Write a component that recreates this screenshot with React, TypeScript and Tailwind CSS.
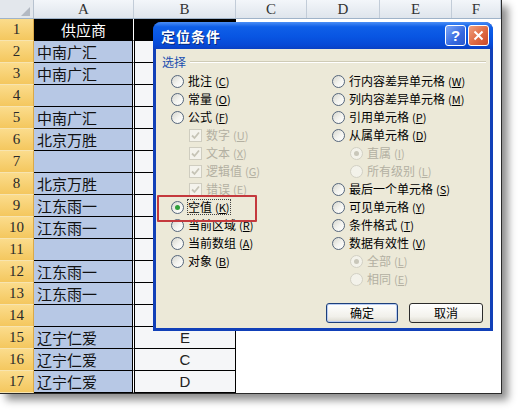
import React from "react";

const cjk = "font-['Noto_Sans_CJK_SC','Noto_Sans',sans-serif]";
const serif = "font-['Liberation_Serif',serif]";

const sheetRows: { a: string; b?: string; head?: boolean }[] = [
  { a: "供应商", head: true },
  { a: "中南广汇" },
  { a: "中南广汇" },
  { a: "" },
  { a: "中南广汇" },
  { a: "北京万胜" },
  { a: "" },
  { a: "北京万胜" },
  { a: "江东雨一" },
  { a: "江东雨一" },
  { a: "" },
  { a: "江东雨一" },
  { a: "江东雨一" },
  { a: "" },
  { a: "辽宁仁爱", b: "E" },
  { a: "辽宁仁爱", b: "C" },
  { a: "辽宁仁爱", b: "D" },
];

const columns = ["A", "B", "C", "D", "E", "F"];
const gridCols = "grid grid-cols-[34px_100px_102px_71px_73px_72px_1fr]";

type Item = {
  text: string;
  k: string;
  kind: "radio" | "check";
  checked?: boolean;
  disabled?: boolean;
  indent?: boolean;
  focus?: boolean;
};

const leftItems: Item[] = [
  { text: "批注", k: "C", kind: "radio" },
  { text: "常量", k: "O", kind: "radio" },
  { text: "公式", k: "F", kind: "radio" },
  { text: "数字", k: "U", kind: "check", checked: true, disabled: true, indent: true },
  { text: "文本", k: "X", kind: "check", checked: true, disabled: true, indent: true },
  { text: "逻辑值", k: "G", kind: "check", checked: true, disabled: true, indent: true },
  { text: "错误", k: "E", kind: "check", checked: true, disabled: true, indent: true },
  { text: "空值", k: "K", kind: "radio", checked: true, focus: true },
  { text: "当前区域", k: "R", kind: "radio" },
  { text: "当前数组", k: "A", kind: "radio" },
  { text: "对象", k: "B", kind: "radio" },
];

const rightItems: Item[] = [
  { text: "行内容差异单元格", k: "W", kind: "radio" },
  { text: "列内容差异单元格", k: "M", kind: "radio" },
  { text: "引用单元格", k: "P", kind: "radio" },
  { text: "从属单元格", k: "D", kind: "radio" },
  { text: "直属", k: "I", kind: "radio", checked: true, disabled: true, indent: true },
  { text: "所有级别", k: "L", kind: "radio", disabled: true, indent: true },
  { text: "最后一个单元格", k: "S", kind: "radio" },
  { text: "可见单元格", k: "Y", kind: "radio" },
  { text: "条件格式", k: "T", kind: "radio" },
  { text: "数据有效性", k: "V", kind: "radio" },
  { text: "全部", k: "L", kind: "radio", checked: true, disabled: true, indent: true },
  { text: "相同", k: "E", kind: "radio", disabled: true, indent: true },
];

function Radio({ checked, disabled }: { checked?: boolean; disabled?: boolean }) {
  return (
    <span
      className={`w-[13px] h-[13px] shrink-0 rounded-full border flex items-center justify-center ${
        disabled
          ? "border-[#d2d0c4] bg-[#f3f2ea]"
          : "border-[#55667c] bg-[linear-gradient(135deg,#d6d6ce,#f4f4f0_55%,#ffffff)]"
      }`}
    >
      {checked && (
        <span className={`w-[5px] h-[5px] rounded-full ${disabled ? "bg-[#c9c7ba]" : "bg-[#2f9e3a]"}`} />
      )}
    </span>
  );
}

function Check({ checked }: { checked?: boolean }) {
  return (
    <span className="w-[13px] h-[13px] shrink-0 border border-[#cfcdc0] bg-[#f4f3ec] flex items-center justify-center">
      {checked && (
        <svg width="9" height="9" viewBox="0 0 9 9">
          <path d="M1 4.5 L3.5 7 L8 1.5" fill="none" stroke="#c6c4b6" strokeWidth="1.8" />
        </svg>
      )}
    </span>
  );
}

function Option({ item }: { item: Item }) {
  return (
    <div className={`h-[18px] flex items-center gap-[4px] ${item.indent ? "pl-[18px]" : ""}`}>
      {item.kind === "radio" ? (
        <Radio checked={item.checked} disabled={item.disabled} />
      ) : (
        <Check checked={item.checked} />
      )}
      <span
        className={`text-[12px] leading-[14px] whitespace-nowrap ${
          item.disabled ? "text-[#b3b0a2]" : "text-black"
        } ${item.focus ? "outline-1 outline-dotted outline-[#444]" : ""}`}
      >
        {item.text}
        <span className="text-[11px] ml-[3px]">
          (<span className="underline">{item.k}</span>)
        </span>
      </span>
    </div>
  );
}

function Dialog() {
  return (
    <div className="absolute left-[153px] top-[22px] w-[340px] h-[309px] rounded-t-[8px] bg-[#1140b8] px-[3px] pb-[3px] flex flex-col">
      {/* Title bar */}
      <div className="h-[27px] -mx-[3px] rounded-t-[8px] bg-[linear-gradient(to_bottom,#4a8ef6_0%,#0f5fe8_18%,#0855e2_55%,#0749d6_85%,#0a3fc2_100%)] flex items-center pl-[8px] pr-[4px]">
        <span className="text-white font-bold text-[14px] leading-none tracking-[1px] [text-shadow:1px_1px_0_#0a2a7a]">
          定位条件
        </span>
        <div className="ml-auto flex gap-[2px] items-center">
          <div className="w-[21px] h-[21px] rounded-[3px] border border-white bg-[linear-gradient(135deg,#7ea7f7,#3569e0_60%,#2a58cc)] flex items-center justify-center text-white font-bold text-[15px] leading-none font-['Liberation_Sans',sans-serif]">
            ?
          </div>
          <div className="w-[21px] h-[21px] rounded-[3px] border border-white bg-[linear-gradient(135deg,#f0a07e,#de6a42_55%,#c9482a)] flex items-center justify-center">
            <svg width="11" height="11" viewBox="0 0 11 11">
              <path d="M1.5 1.5 L9.5 9.5 M9.5 1.5 L1.5 9.5" stroke="#fff" strokeWidth="2" />
            </svg>
          </div>
        </div>
      </div>

      {/* Body */}
      <div className="relative flex-1 bg-[#ece9d8] flex flex-col">
        <div className="flex items-center h-[14px] mt-[6px] pl-[6px] pr-[4px]">
          <span className="text-[12px] leading-[14px] text-[#1b4fb0]">选择</span>
          <div className="flex-1 ml-[4px] h-[2px] border-t border-[#cfcbb6] border-b border-b-white" />
        </div>

        <div className="flex mt-[3px]">
          <div className="w-[161px] ml-[15px] flex flex-col">
            {leftItems.map((it) => (
              <Option key={it.text} item={it} />
            ))}
          </div>
          <div className="flex-1 flex flex-col">
            {rightItems.map((it) => (
              <Option key={it.text + it.k} item={it} />
            ))}
          </div>
        </div>

        <div className="mt-auto mb-[5px] flex justify-end gap-[11px] pr-[7px]">
          <button className="w-[72px] h-[20px] rounded-[3px] border border-[#1d3f7a] bg-[linear-gradient(to_bottom,#ffffff,#f1f0ea_70%,#dcdad0)] shadow-[inset_0_0_0_1px_#b9cdf3] text-[12px] leading-none text-black">
            确定
          </button>
          <button className="w-[74px] h-[20px] rounded-[3px] border border-[#2b2b2b] bg-[linear-gradient(to_bottom,#ffffff,#f3f2ec_70%,#dedcd2)] text-[12px] leading-none text-black">
            取消
          </button>
        </div>

        {/* red annotation box */}
        <div className="absolute left-[1px] top-[146px] w-[100px] h-[27px] border-2 border-[#c4393d] rounded-[1px]" />
      </div>
    </div>
  );
}

export default function App() {
  return (
    <div className={`w-[524px] h-[416px] bg-white overflow-hidden ${cjk}`}>
      <div className="relative w-[502px] border-r border-b border-[#2a2a2a] bg-white shadow-[6px_6px_8px_rgba(0,0,0,0.45)]">
        {/* column headers */}
        <div className={`${gridCols} h-[19px] border-b border-[#9fb3c9]`}>
          <div className="bg-[#e3e7ec] border-r border-[#b7c2cf] flex items-end justify-end pr-[3px] pb-[2px]">
            <div className="w-0 h-0 border-l-[9px] border-l-transparent border-b-[9px] border-b-[#b3b9c2]" />
          </div>
          {columns.map((c) => (
            <div
              key={c}
              className={`bg-[linear-gradient(to_bottom,#f3f6fa,#dfe5ec)] border-r border-[#c2ccd8] flex items-center justify-center text-[15px] leading-none text-[#333] ${serif}`}
            >
              {c}
            </div>
          ))}
        </div>

        {/* rows */}
        {sheetRows.map((r, i) => (
          <div key={i} className={`${gridCols} h-[22px]`}>
            <div
              className={`bg-[linear-gradient(to_bottom,#fbdc8c,#f4c75e)] border-b border-[#f7e4b0] border-r border-r-[#d9a94a] flex items-center justify-center text-[15px] leading-none text-[#2a2a2a] ${serif}`}
            >
              {i + 1}
            </div>
            <div
              className={`border-b border-black border-r border-r-white shadow-[inset_-1px_0_0_#000] flex items-center ${
                r.head ? "bg-black justify-center text-white" : "bg-[#b7c8e5] pl-[3px] text-[#111]"
              } text-[15px] leading-none whitespace-nowrap`}
            >
              {r.a}
            </div>
            <div
              className={`border-b border-black border-r border-l border-l-black border-r-black flex items-center justify-center text-[15px] leading-none text-[#222] font-['Liberation_Sans',sans-serif] ${
                r.head ? "bg-black" : "bg-[#f5f6f8]"
              }`}
            >
              {r.b}
            </div>
            <div className="bg-white" />
            <div className="bg-white" />
            <div className="bg-white" />
            <div className="bg-white" />
          </div>
        ))}

        <Dialog />
      </div>
    </div>
  );
}
